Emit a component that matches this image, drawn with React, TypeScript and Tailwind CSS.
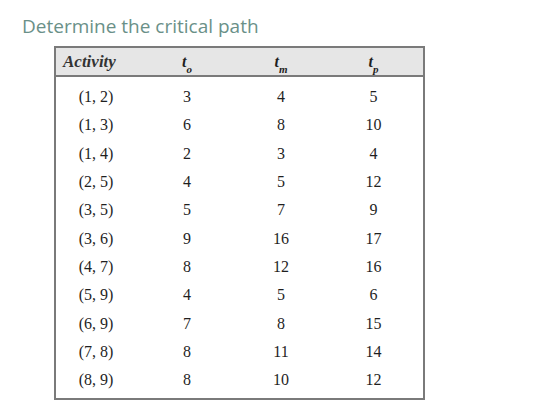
const rows: [string, string, string, string][] = [
  ['(1, 2)', '3', '4', '5'],
  ['(1, 3)', '6', '8', '10'],
  ['(1, 4)', '2', '3', '4'],
  ['(2, 5)', '4', '5', '12'],
  ['(3, 5)', '5', '7', '9'],
  ['(3, 6)', '9', '16', '17'],
  ['(4, 7)', '8', '12', '16'],
  ['(5, 9)', '4', '5', '6'],
  ['(6, 9)', '7', '8', '15'],
  ['(7, 8)', '8', '11', '14'],
  ['(8, 9)', '8', '10', '12'],
]

function T({ sub }: { sub: string }) {
  return (
    <span className="italic font-bold text-[16px]">
      t<sub className="text-[11px] align-[-4px]">{sub}</sub>
    </span>
  )
}

export default function App() {
  return (
    <div className="w-[553px] h-[412px] bg-white overflow-hidden">
      <h1 className="pl-[22px] pt-[14px] text-[19px] leading-[24px] text-[#6a9088] font-['Open_Sans',sans-serif]">
        Determine the critical path
      </h1>
      <div className="ml-[54px] mt-[8px] w-[371px] border-2 border-[#7a7a7a] font-['Liberation_Serif',serif] text-[16px] text-[#1f1f1f]">
        <div className="grid grid-cols-[80px_102px_86px_1fr] h-[29px] items-center bg-[#e6e6e6] border-b-2 border-[#7a7a7a]">
          <span className="pl-[7px] italic font-bold text-[17px] text-[#333]">Activity</span>
          <span className="text-center"><T sub="o" /></span>
          <span className="text-center"><T sub="m" /></span>
          <span className="text-center"><T sub="p" /></span>
        </div>
        <div className="pt-[6px] pb-[4px]">
          {rows.map((r) => (
            <div key={r[0]} className="grid grid-cols-[80px_102px_86px_1fr] h-[28.3px] items-center">
              {r.map((c, i) => (
                <span key={i} className="text-center">{c}</span>
              ))}
            </div>
          ))}
        </div>
      </div>
    </div>
  )
}
